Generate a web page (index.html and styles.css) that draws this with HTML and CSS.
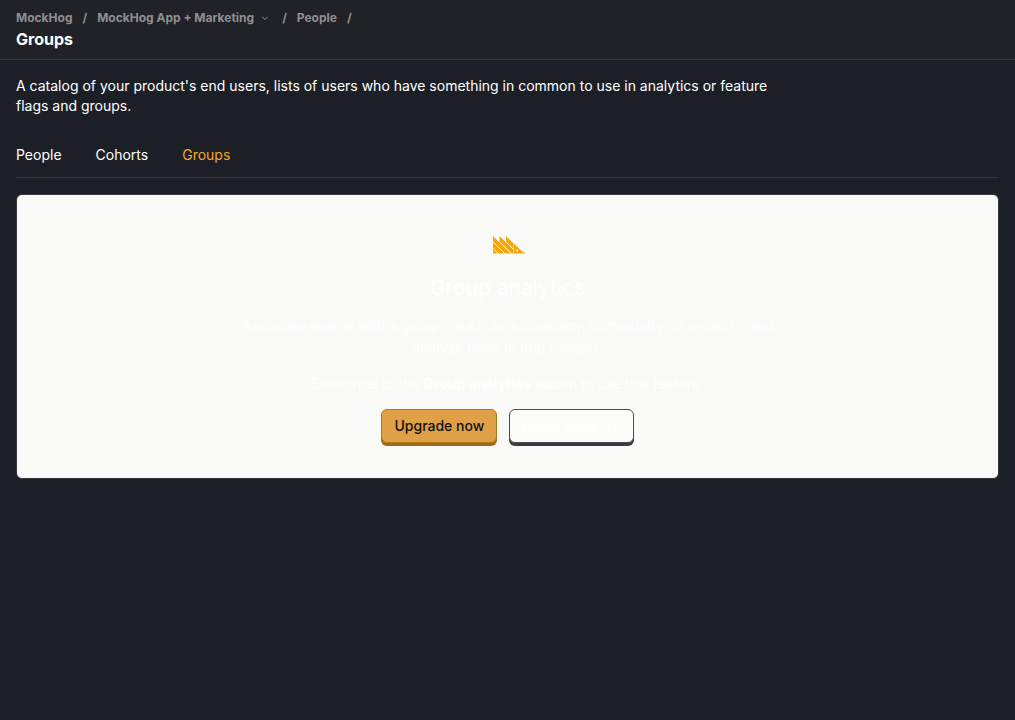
FILE: index.html
```html
<!DOCTYPE html>
<html lang="en">
<head>
<meta charset="utf-8">
<meta name="viewport" content="width=device-width, initial-scale=1">
<title>Groups • MockHog</title>
<link rel="stylesheet" href="styles.css">
</head>
<body>
<header class="topbar">
  <nav class="breadcrumbs" aria-label="Breadcrumb">
    <a href="#">MockHog</a>
    <span class="separator">/</span>
    <button class="project-switcher" type="button">MockHog App + Marketing
      <svg class="chevron" viewBox="0 0 14 14" aria-hidden="true"><path d="M4.200 5.800 7 8.500l2.800-2.700"/></svg>
    </button>
    <span class="separator">/</span>
    <a href="#">People</a>
    <span class="separator">/</span>
  </nav>
  <h1 class="page-title">Groups</h1>
</header>
<main class="scene">
  <p class="caption">A catalog of your product's end users, lists of users who have something in common to use in analytics or feature flags and groups.</p>
  <nav class="tabs" aria-label="People sections">
    <a class="tab" href="#">People</a>
    <a class="tab" href="#">Cohorts</a>
    <a class="tab tab-active" href="#" aria-current="page">Groups</a>
  </nav>
  <section class="paygate">
    <svg class="logo" viewBox="0 0 32 18" aria-hidden="true">
      <path d="M0 0 6.500 6.500V0L13 6.500V0l7.500 7.500v10H0z"/>
      <path fill-rule="evenodd" d="M21 7.500 30 16.500h2v1H21zM24 13.500a1 1 0 1 0 .1 0z"/>
      <path class="logo-gaps" d="M0 5.800 12.200 18M0 12.300l5.700 5.700M6.500 5.800 18.700 18M13 5.800l7.500 7.500"/>
    </svg>
    <h2 class="paygate-title">Group analytics</h2>
    <p class="paygate-text">Associate events with a group - such as a company, community, or project - and analyze them in that context.</p>
    <p class="paygate-text">Subscribe to the <b>Group analytics</b> addon to use this feature.</p>
    <div class="actions">
      <button class="button button-primary" type="button">Upgrade now</button>
      <a class="button button-secondary" href="#">Learn more
        <svg class="external" viewBox="0 0 14 14" aria-hidden="true"><path d="M7 2H1.500v10h9V9M7 2v10M8.500 2h3.500v4M12 2 8.500 6"/></svg>
      </a>
    </div>
  </section>
</main>
</body>
</html>
```
FILE: styles.css
```css
* { box-sizing: border-box; }
body {
  margin: 0;
  min-height: 100vh;
  background: #1d1f27;
  color: #fff;
  font: 14px/20px Inter, "Liberation Sans", sans-serif;
}
h1, h2, p { margin: 0; }
a { color: inherit; text-decoration: none; }
button { font: inherit; color: inherit; cursor: pointer; }
.topbar {
  padding: 8px 16px 9px;
  background: #212227;
  border-bottom: 1px solid #35373e;
}
.breadcrumbs {
  display: flex;
  align-items: center;
  gap: 10px;
  color: #8f8f92;
  font-size: 12px;
  font-weight: 700;
}
.project-switcher {
  display: flex;
  align-items: center;
  gap: 4px;
  padding: 0;
  border: 0;
  background: none;
}
.chevron {
  width: 14px;
  height: 14px;
  fill: none;
  stroke: currentColor;
}
.page-title { font-size: 16px; line-height: 22px; font-weight: 700; }
.scene { padding: 16px; }
.caption { max-width: 768px; }
.tabs {
  display: flex;
  gap: 34px;
  margin: 16px 0;
  border-bottom: 1px solid #35373e;
}
.tab { padding: 13px 0 12px; }
.tab-active { color: #f7a826; }
.paygate {
  display: flex;
  flex-direction: column;
  align-items: center;
  padding: 41px 32px 32px;
  background: #fafaf8;
  border: 1px solid #35373e;
  border-radius: 6px;
  text-align: center;
}
.logo { width: 32px; height: 18px; margin-left: 2px; fill: #f7a501; }
.logo-gaps { fill: none; stroke: #fafaf8; }
.paygate-title { margin: 20px 0 13px; font-size: 21px; line-height: 28px; font-weight: 400; }
.paygate-text { max-width: 576px; margin-bottom: 14px; line-height: 22px; }
.actions { display: flex; gap: 12px; margin-bottom: 3px; }
.button {
  display: flex;
  align-items: center;
  gap: 8px;
  height: 34px;
  padding: 0 12px;
  border: 1px solid;
  border-radius: 6px;
  font-weight: 500;
}
.button-primary {
  background: #e0a045;
  border-color: #b17816;
  box-shadow: 0 3px 0 #a0691b;
  color: #111;
}
.button-secondary {
  background: #fcfcfb;
  border-color: #4a4c52;
  box-shadow: 0 3px 0 #3b3c42;
}
.external { width: 14px; height: 14px; fill: none; stroke: currentColor; }
```
